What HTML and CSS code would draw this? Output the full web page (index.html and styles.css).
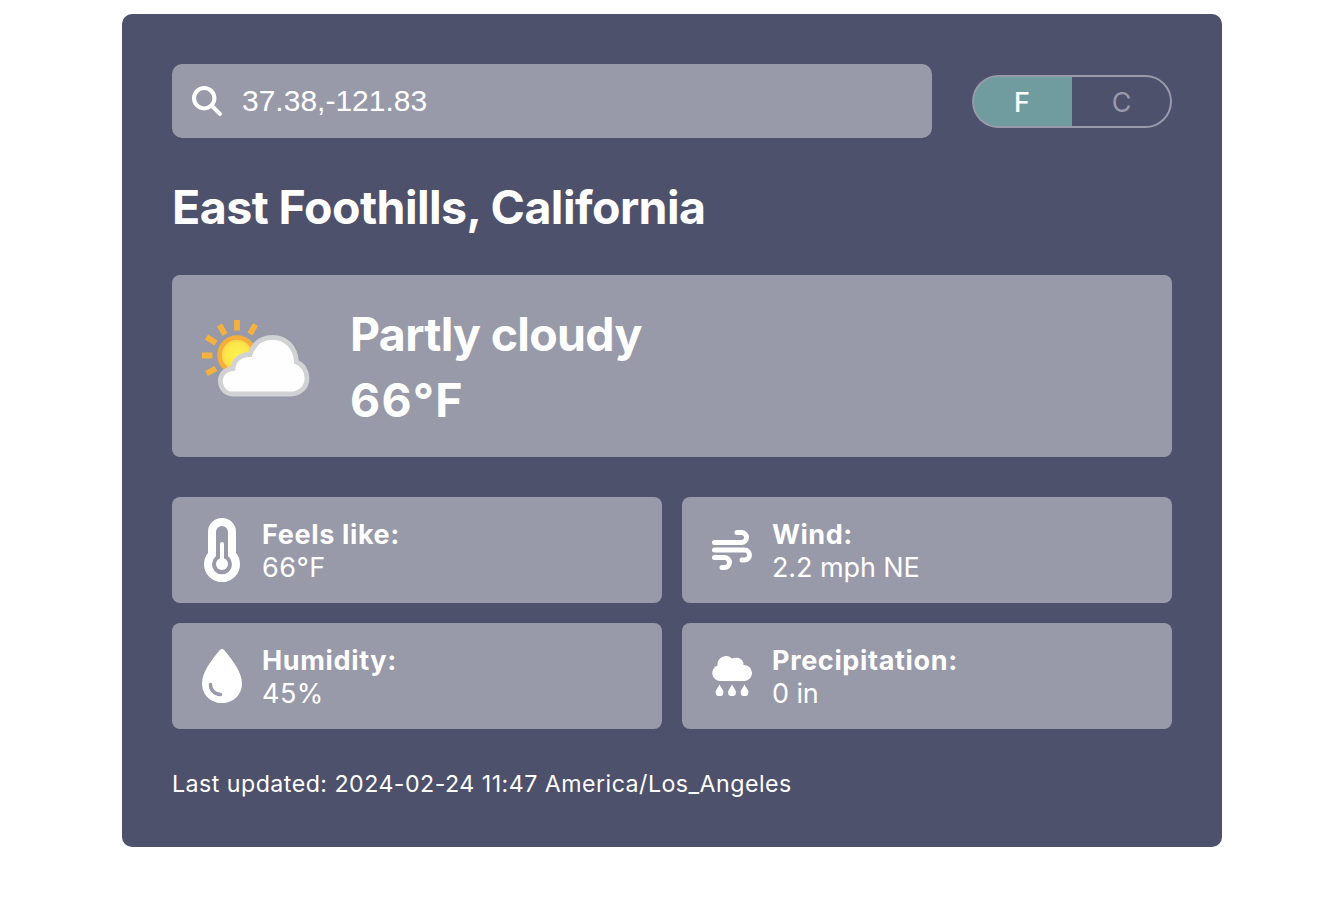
FILE: index.html
```
<!DOCTYPE html>
<html lang="en">
<head>
<meta charset="utf-8">
<title>Weather</title>
<link rel="stylesheet" href="styles.css">
</head>
<body>
<main class="weather">
  <header class="toolbar">
    <label class="search">
      <svg class="search-icon" viewBox="0 0 30 30"><circle cx="12.200" cy="12.200" r="10.200"/><path d="M20 20l7.900 7.900"/></svg>
      <span class="query">37.38,-121.83</span>
    </label>
    <div class="units">
      <button class="unit unit-f">F</button><button class="unit unit-c">C</button>
    </div>
  </header>
  <h1 class="place">East Foothills, California</h1>
  <section class="current">
    <svg class="sky" viewBox="0 2 128 128">
      <defs><radialGradient id="sun"><stop offset="0" stop-color="#fff34c"/><stop offset=".68" stop-color="#fce64b"/><stop offset="1" stop-color="#f9c642"/></radialGradient></defs>
      <g stroke="#f4b13d" stroke-width="5.800"><path d="M45 20v10.500M27.500 25l5.500 9.500M63.500 24.500l-5.500 9.500M14.500 37l9.500 6M10 55.500h10.500M14.500 73.500l9.500-5"/></g>
      <circle cx="45" cy="55" r="17.500" fill="url(#sun)" stroke="#f4ae3b" stroke-width="4.500"/>
      <path d="M41 94C31 94 27.500 85 28.500 79C29.500 72.500 35 69 41 68.500C41.500 61 47 54.500 58 54.500C62 43 70 37.300 80.500 37.300C94 37.300 103.500 47 104.500 62C111 64.500 115 71 115 78C115 88 107.500 94 98 94Z" fill="#fefefe" stroke="#d0d2d3" stroke-width="4.800"/>
    </svg>
    <div class="conditions"><div class="condition">Partly cloudy</div><div class="temperature">66°F</div></div>
  </section>
  <section class="details">
    <article class="detail">
      <svg class="icon thermometer" viewBox="0 0 40 64"><path fill="none" stroke="#fff" stroke-width="8" d="M10 14a10 10 0 0 1 20 0v22.500a14 14 0 1 1-20 0z"/><path stroke="#fff" stroke-width="4" stroke-linecap="round" d="M20 26v20"/><circle cx="20" cy="46" r="6"/></svg>
      <div><div class="label feels">Feels like:</div><div class="value degrees">66°F</div></div>
    </article>
    <article class="detail">
      <svg class="icon wind" viewBox="0 0 40 40"><g fill="none" stroke="#fff" stroke-width="5" stroke-linecap="round" stroke-linejoin="round"><path d="M2.500 12.500h27a5 5 0 0 0 0-10H25M2.500 20h30a5 5 0 0 1 0 10h-2.500M2.500 27.500h10a5 5 0 0 1 0 10H10"/></g></svg>
      <div><div class="label windy">Wind:</div><div class="value speed">2.2 mph NE</div></div>
    </article>
    <article class="detail">
      <svg class="icon drop" viewBox="0 0 40 54"><path d="M20 0C18.600 0 17.800 1 16.800 2.200C9.500 11 0 23.500 0 34.200C0 46 8.800 54 20 54S40 46 40 34.200C40 23.500 30.500 11 23.200 2.200C22.200 1 21.400 0 20 0z"/><path d="M8.500 35.500c0 5.500 4 10 10 10" fill="none" stroke="#9899a9" stroke-width="3.500" stroke-linecap="round"/></svg>
      <div><div class="label humid">Humidity:</div><div class="value degrees">45%</div></div>
    </article>
    <article class="detail">
      <svg class="icon rain" viewBox="0 0 40 40"><path d="M8 25A8 8 0 0 1 5.500 9.500A8.600 8.600 0 0 1 20 2.500Q23 1.200 26.500 2Q31.500 3.500 31.500 9A8 8 0 0 1 32.500 25Z"/><g><path id="raindrop" d="M7.500 28.500C6.500 31 3.500 34 3.500 36.500a4 3.700 0 0 0 8 0C11.500 34 8.500 31 7.500 28.500z"/><use href="#raindrop" x="12.500"/><use href="#raindrop" x="25"/></g></svg>
      <div><div class="label precip">Precipitation:</div><div class="value">0 in</div></div>
    </article>
  </section>
  <footer class="updated">Last updated: 2024-02-24 11:47 America/Los_Angeles</footer>
</main>
</body>
</html>
```
FILE: styles.css
```
* { box-sizing: border-box; }
body { margin: 0; background: #fff; color: #fff; font-family: Inter, sans-serif; }
.weather { width: 1100px; height: 833px; margin: 14px 0 0 122px; padding: 50px; border-radius: 10px; background: #4e516b; }
.toolbar { display: flex; align-items: center; gap: 40px; height: 74px; }
.search { display: flex; align-items: center; width: 760px; height: 74px; padding-left: 20px; gap: 20px; border-radius: 10px; background: #9899a9; }
.search-icon { width: 30px; height: 30px; fill: none; stroke: #fff; stroke-width: 4px; stroke-linecap: round; }
.query { font: 30px/36px "Liberation Sans", sans-serif; }
.units { display: flex; width: 200px; height: 53px; margin-top: 1px; }
.unit { width: 100px; height: 53px; padding: 2px 0 0; border: 2px solid #9899a9; background: transparent; color: #9899a9; font: 27px/47px Inter, sans-serif; }
.unit-f { border-right: 0; padding-right: 2px; border-radius: 27px 0 0 27px; background: #709c9f; color: #fff; font-weight: 500; }
.unit-c { border-left: 0; padding-left: 1px; border-radius: 0 27px 27px 0; }
.place { height: 57px; margin: 41px 0 39px; font-size: 46.5px; line-height: 57px; font-weight: 700; letter-spacing: -.55px; white-space: nowrap; }
.current { display: flex; align-items: center; gap: 30px; height: 182px; padding-left: 20px; border-radius: 8px; background: #9899a9; }
.sky { width: 128px; height: 128px; }
.conditions { padding-top: 2px; }
.condition, .temperature { font-size: 46.5px; line-height: 66px; font-weight: 700; }
.condition { letter-spacing: -.7px; }
.temperature { letter-spacing: 1.2px; }
.details { display: grid; grid-template-columns: 490px 490px; gap: 20px; margin-top: 40px; }
.detail { display: flex; align-items: center; gap: 20px; height: 106px; padding: 2px 0 0 30px; border-radius: 8px; background: #9899a9; }
.icon { width: 40px; margin-top: -2px; fill: #fff; }
.label, .value { font-size: 27px; line-height: 33px; }
.label { font-weight: 700; letter-spacing: .65px; }
.windy { letter-spacing: .5px; }
.value { font-weight: 400; letter-spacing: -.1px; }
.degrees { letter-spacing: .5px; }
.thermometer { height: 64px; }
.drop { height: 54px; }
.wind, .rain { height: 40px; }
.updated { margin-top: 41px; font-size: 23.2px; line-height: 29px; letter-spacing: .47px; }
```
